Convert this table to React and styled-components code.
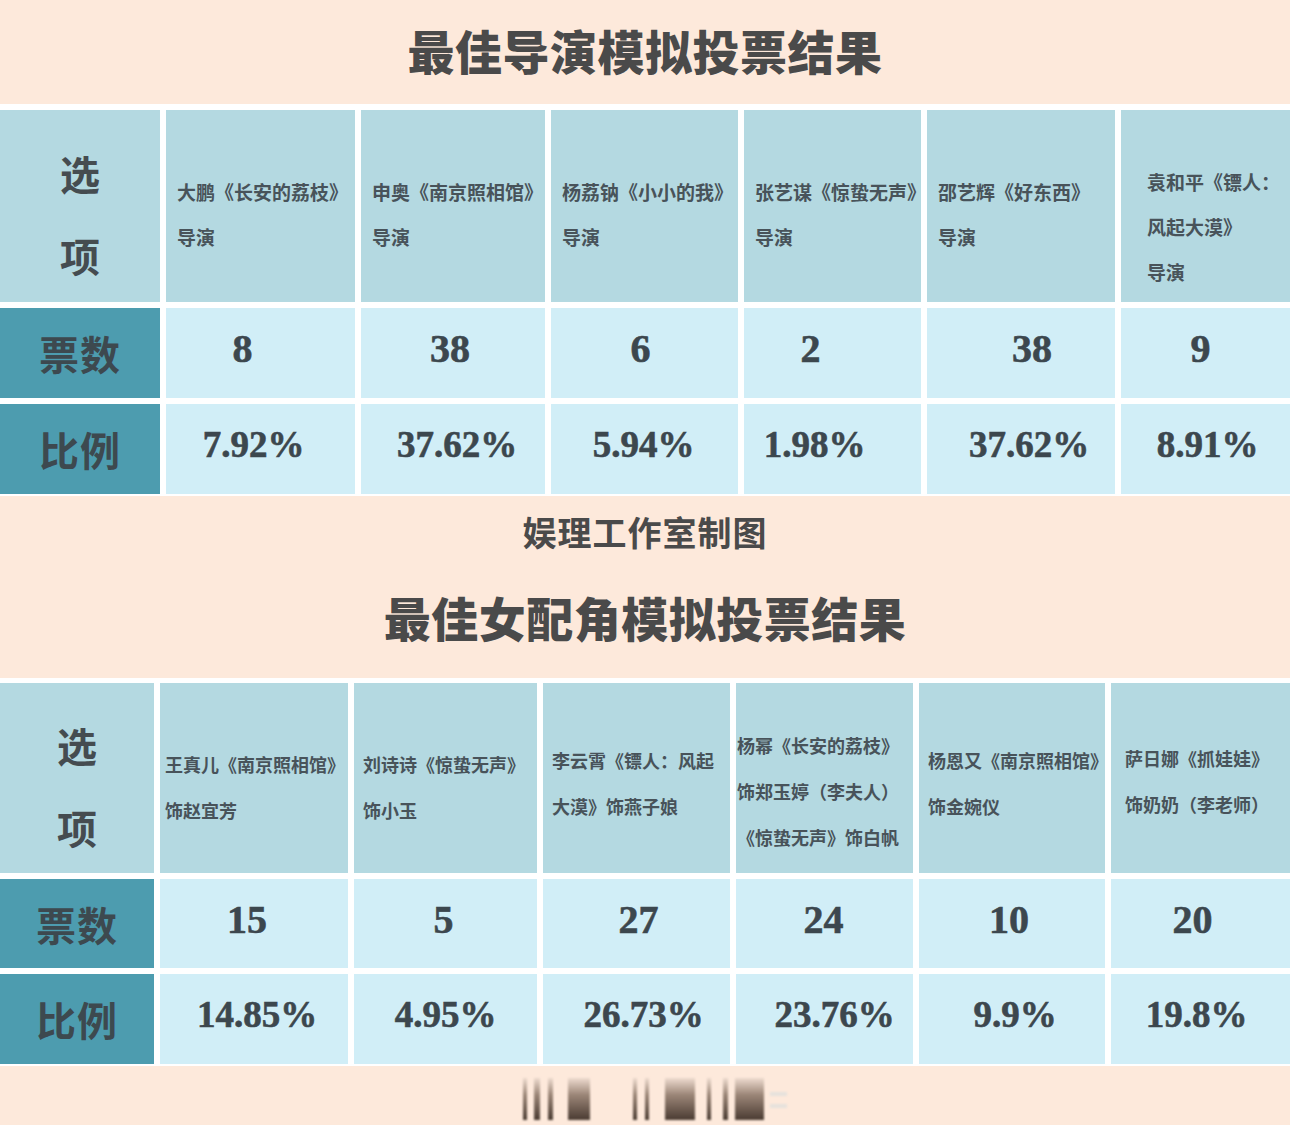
import React from 'react';
import styled, { createGlobalStyle } from 'styled-components';

const GlobalStyle = createGlobalStyle`
  html, body {
    margin: 0;
    padding: 0;
    background: #fff;
  }
  body {
    font-family: "Noto Sans CJK SC", "Noto Sans", sans-serif;
  }
`;

// palette
const PEACH = '#fde9db';
const HEAD = '#b4d9e1';
const CELL = '#d1eef7';
const TEAL = '#4d9caf';
const INK = '#454c50';

const Page = styled.div`
  width: 1290px;
  height: 1125px;
  display: flex;
  flex-direction: column;
  background: #fff;
  overflow: hidden;
`;

const Banner = styled.header`
  height: 104px;
  flex-shrink: 0;
  background: ${PEACH};
  display: flex;
  align-items: center;
  justify-content: center;
  padding-bottom: 4px;
  box-sizing: border-box;
  margin-bottom: 6px;
`;

const Title = styled.h1`
  margin: 0;
  font-size: 47px;
  line-height: 60px;
  font-weight: 900;
  color: #4a4a4a;
  letter-spacing: 0.5px;
`;

const Middle = styled.section`
  height: 182px;
  flex-shrink: 0;
  margin: 2px 0 5px;
  background: ${PEACH};
  display: flex;
  flex-direction: column;
  align-items: center;
  padding-top: 16px;
  box-sizing: border-box;
`;

const Caption = styled.p`
  margin: 0 0 35px;
  font-size: 34px;
  line-height: 40px;
  font-weight: 700;
  color: #4a4a4a;
  letter-spacing: 1px;
`;

const Footer = styled.footer`
  flex: 1;
  margin-top: 2px;
  background: ${PEACH};
  display: flex;
  justify-content: center;
  padding-top: 6px;
  padding-right: 10px;
  box-sizing: border-box;
`;

const Grid = styled.div`
  display: grid;
  grid-template-columns: ${({ $cols }) => $cols.map((c) => `${c}px`).join(' ')};
  grid-template-rows: ${({ $rows }) => $rows.map((r) => `${r}px`).join(' ')};
  gap: 6px;
  flex-shrink: 0;
`;

const OptionCell = styled.div`
  background: ${HEAD};
  display: flex;
  flex-direction: column;
  align-items: center;
  justify-content: center;
  padding-top: 16px;
  box-sizing: border-box;
  font-size: 40px;
  line-height: 82px;
  font-weight: 700;
  color: ${INK};
`;

const HeadCell = styled.div`
  background: ${HEAD};
  display: flex;
  flex-direction: column;
  justify-content: center;
  padding: ${({ $pt }) => $pt}px 0 0 ${({ $pl }) => $pl}px;
  box-sizing: border-box;
  font-size: ${({ $fs }) => $fs}px;
  line-height: ${({ $lh }) => $lh}px;
  font-weight: 700;
  color: #48535a;
  white-space: nowrap;
  overflow: visible;
`;

const LabelCell = styled.div`
  background: ${TEAL};
  display: flex;
  align-items: center;
  justify-content: center;
  font-size: 40px;
  font-weight: 700;
  color: #3d494f;
  letter-spacing: 1px;
`;

const ValueCell = styled.div`
  background: ${CELL};
  display: flex;
  align-items: center;
  justify-content: center;
  padding-bottom: 9px;
  padding-left: ${({ $dx }) => Math.max($dx, 0) * 2}px;
  padding-right: ${({ $dx }) => Math.max(-$dx, 0) * 2}px;
  box-sizing: border-box;
  font-family: "Liberation Serif", "Times New Roman", serif;
  font-weight: 700;
  font-size: ${({ $fs }) => $fs}px;
  color: #3c474e;
  -webkit-text-stroke: 0.6px #3c474e;
`;

const directors = {
  title: '最佳导演模拟投票结果',
  cols: [160, 189, 184, 187, 177, 188, 169],
  rows: [192, 90, 90],
  fs: 19,
  lh: 45,
  pl: 11,
  pt: 16,
  options: [
    { lines: ['大鹏《长安的荔枝》', '导演'], votes: 8, ratio: '7.92%', vx: -18, rx: -7 },
    { lines: ['申奥《南京照相馆》', '导演'], votes: 38, ratio: '37.62%', vx: -3, rx: 4 },
    { lines: ['杨荔钠《小小的我》', '导演'], votes: 6, ratio: '5.94%', vx: -4, rx: -1 },
    { lines: ['张艺谋《惊蛰无声》', '导演'], votes: 2, ratio: '1.98%', vx: -22, rx: -18 },
    { lines: ['邵艺辉《好东西》', '导演'], votes: 38, ratio: '37.62%', vx: 11, rx: 8 },
    { lines: ['袁和平《镖人：', '风起大漠》', '导演'], votes: 9, ratio: '8.91%', vx: -5, rx: 2, pl: 26, pt: 40 },
  ],
};

const actresses = {
  title: '最佳女配角模拟投票结果',
  cols: [154, 188, 183, 187, 177, 186, 179],
  rows: [190, 89, 90],
  fs: 18,
  lh: 46,
  pl: 5,
  pt: 18,
  options: [
    { lines: ['王真儿《南京照相馆》', '饰赵宜芳'], votes: 15, ratio: '14.85%', vx: -7, rx: 3 },
    { lines: ['刘诗诗《惊蛰无声》', '饰小玉'], votes: 5, ratio: '4.95%', vx: -2, rx: 0, pl: 9 },
    { lines: ['李云霄《镖人：风起', '大漠》饰燕子娘'], votes: 27, ratio: '26.73%', vx: 2, rx: 7, pl: 9, pt: 10 },
    { lines: ['杨幂《长安的荔枝》', '饰郑玉婷（李夫人）', '《惊蛰无声》饰白帆'], votes: 24, ratio: '23.76%', vx: -1, rx: 10, pl: 1, pt: 26 },
    { lines: ['杨恩又《南京照相馆》', '饰金婉仪'], votes: 10, ratio: '9.9%', vx: -3, rx: 3, pl: 9, pt: 10 },
    { lines: ['萨日娜《抓娃娃》', '饰奶奶（李老师）'], votes: 20, ratio: '19.8%', vx: -8, rx: -4, pl: 14, pt: 6 },
  ],
};

const VoteTable = ({ data }) => (
  <Grid $cols={data.cols} $rows={data.rows}>
    <OptionCell>
      <span>选</span>
      <span>项</span>
    </OptionCell>
    {data.options.map((opt, i) => (
      <HeadCell
        key={`h${i}`}
        $fs={data.fs}
        $lh={data.lh}
        $pl={opt.pl ?? data.pl}
        $pt={opt.pt ?? data.pt}
      >
        {opt.lines.map((line) => (
          <span key={line}>{line}</span>
        ))}
      </HeadCell>
    ))}
    <LabelCell>票数</LabelCell>
    {data.options.map((opt, i) => (
      <ValueCell key={`v${i}`} $fs={40} $dx={opt.vx}>
        {opt.votes}
      </ValueCell>
    ))}
    <LabelCell>比例</LabelCell>
    {data.options.map((opt, i) => (
      <ValueCell key={`r${i}`} $fs={37} $dx={opt.rx}>
        {opt.ratio}
      </ValueCell>
    ))}
  </Grid>
);

// blurred stamp at the bottom of the picture
const bars = [
  [43, 4], [54, 6], [68, 5], [88, 22], [153, 4], [165, 4],
  [185, 30], [227, 4], [243, 5], [255, 29],
];

const Stamp = () => (
  <svg width="320" height="50" viewBox="0 0 320 50" style={{ filter: 'blur(1px)' }}>
    <defs>
      <linearGradient id="bar" x1="0" y1="0" x2="0" y2="1">
        <stop offset="0" stopColor="#eedbcf" />
        <stop offset="0.4" stopColor="#9c8678" />
        <stop offset="1" stopColor="#4a3b32" />
      </linearGradient>
    </defs>
    {bars.map(([x, w]) => (
      <rect key={x} x={x} y={6} width={w} height={42} fill="url(#bar)" />
    ))}
    <rect x={290} y={20} width={17} height={4} fill="#e6e1dc" />
    <rect x={290} y={32} width={17} height={4} fill="#e6e1dc" />
  </svg>
);

const App = () => (
  <>
    <GlobalStyle />
    <Page>
      <Banner>
        <Title>{directors.title}</Title>
      </Banner>
      <VoteTable data={directors} />
      <Middle>
        <Caption>娱理工作室制图</Caption>
        <Title>{actresses.title}</Title>
      </Middle>
      <VoteTable data={actresses} />
      <Footer>
        <Stamp />
      </Footer>
    </Page>
  </>
);

export default App;
